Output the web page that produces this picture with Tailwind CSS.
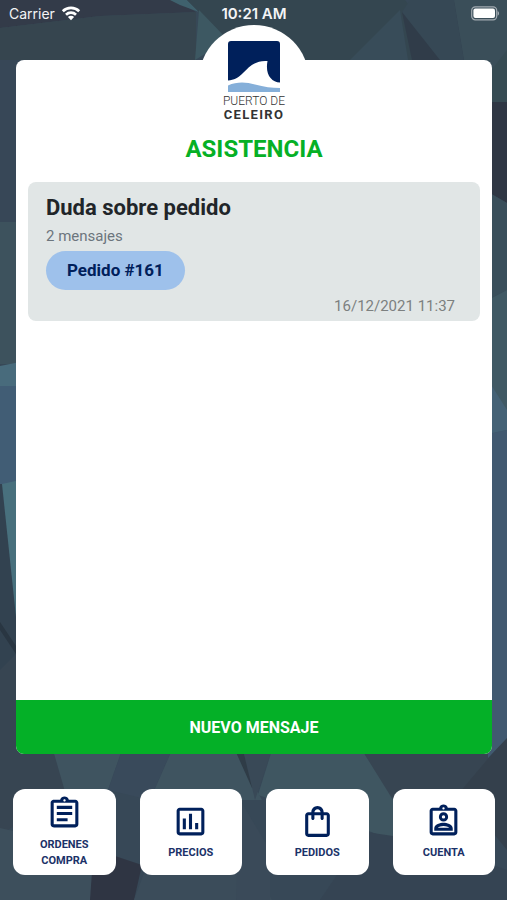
<!DOCTYPE html>
<html lang="es">
<head>
<meta charset="utf-8">
<meta name="viewport" content="width=device-width, initial-scale=1">
<title>Asistencia</title>
<script src="https://cdn.jsdelivr.net/npm/@tailwindcss/browser@4"></script>
</head>
<body class="font-[Roboto,sans-serif]">
<div class="relative isolate flex min-h-screen flex-col overflow-hidden bg-[#374857]">
  <!-- Low-poly backdrop -->
  <svg class="absolute inset-0 -z-10 h-full w-full" viewBox="0 0 507 900" preserveAspectRatio="none" aria-hidden="true">
    <path fill="#333b49" d="M0 0H175L196 12L100 16L0 28Z"/>
    <path fill="#36454f" d="M0 28L100 16L196 12V60H0Z"/>
    <path fill="#3f616d" d="M170 0H187L199 12L180 5Z"/>
    <path fill="#344650" d="M187 0H405L450 60H230L199 12Z"/>
    <path fill="#3d5862" d="M199 10L228 40L195 60Z"/>
    <path fill="#384c59" d="M350 60L400 10L408 60Z"/>
    <path fill="#303c49" d="M388 0H420L402 12L412 60H464L454 0Z"/>
    <path fill="#364855" d="M410 0H454L464 60H440L402 12Z"/>
    <path fill="#3a4e59" d="M454 0H507V102H480L464 60Z"/>
    <path fill="#364b53" d="M507 50L490 72V102H507Z"/>
    <path fill="#374757" d="M0 60H20V222H0Z"/>
    <path fill="#3d525d" d="M0 222H20V364H0Z"/>
    <path fill="#486b7c" d="M0 366L20 362V388H0Z"/>
    <path fill="#415d75" d="M0 386H20V484H0Z"/>
    <path fill="#324250" d="M0 484H3L20 655V700H0Z"/>
    <path fill="#48707d" d="M2 484L20 480V655Z"/>
    <path fill="#374552" d="M0 740H60L70 790L0 835Z"/>
    <path fill="#374552" d="M0 670L20 650V745H0Z"/>
    <path fill="#293642" d="M0 622L20 652V660L0 630Z"/>
    <path fill="#2f3744" d="M488 102H507V203L488 192Z"/>
    <path fill="#3a4f5b" d="M488 192L507 203V290L488 300Z"/>
    <path fill="#405964" d="M488 300L507 290V433H488Z"/>
    <path fill="#456276" d="M488 380L507 410V430L488 434Z"/>
    <path fill="#3f5460" d="M53 750H122L108 790L66 795Z"/>
    <path fill="#394a5b" d="M122 750H172L150 800L108 790Z"/>
    <path fill="#3f5460" d="M172 750H235L262 800H150Z"/>
    <path fill="#2f3c47" d="M235 750H243L256 788L252 788Z"/>
    <path fill="#394957" d="M243 750H272L255 800Z"/>
    <path fill="#3f5661" d="M272 750H362L395 800L420 850L366 830L258 795Z"/>
    <path fill="#374552" d="M362 750H495L460 800H393Z"/>
    <path fill="#34404c" d="M507 736L460 792L507 850Z"/>
    <path fill="#415970" d="M488 434L507 430V738L488 758Z"/>
    <path fill="#3d4f5c" d="M0 828L18 832L95 875L92 900H0Z"/>
    <path fill="#2f3543" d="M112 855L142 865L134 900H90L92 872Z"/>
    <path fill="#3b4c5a" d="M146 868L250 860L272 900H134Z"/>
    <path fill="#3a4a59" d="M240 800L270 850V900H236Z"/>
    <path fill="#354453" d="M366 832L420 840L507 870V900H320Z"/>
  </svg>

  <header class="flex h-7 items-center font-[Inter,sans-serif] text-gray-100">
    <div class="flex flex-1 items-center gap-[6px] pl-[9px] text-sm">
      <span>Carrier</span>
      <svg class="h-4 w-5" viewBox="0 0 20 16" role="img" aria-label="Wi-Fi">
        <g fill="none" stroke="#fff" stroke-width="2.7">
          <path d="M1.800 5.200a11.700 11.700 0 0 1 16.400 0"/>
          <path d="M5 8.700a7.200 7.200 0 0 1 10 0"/>
        </g>
        <path fill="#fff" d="M10 14.200L6.900 11a4.400 4.400 0 0 1 6.200 0Z"/>
      </svg>
    </div>
    <time class="text-[15px] font-semibold">10:21 AM</time>
    <div class="flex flex-1 justify-end pr-2">
      <svg class="h-4 w-7" viewBox="0 0 28 16" role="img" aria-label="Batería">
        <rect x="0.7" y="0.8" width="25" height="13" rx="3.6" fill="none" stroke="#a2aab1" stroke-width="1.2"/>
        <rect x="2.4" y="2.5" width="21.6" height="9.6" rx="2" fill="#fff"/>
        <path fill="#a2aab1" d="M26.600 5q1.600.8 1.400 2.300q.2 1.700-1.400 2.500Z"/>
      </svg>
    </div>
  </header>

  <main class="relative mr-[15px] ml-4 mt-8 flex flex-1 flex-col rounded-lg bg-white">
    <div class="absolute -top-[35px] left-1/2 flex size-[110px] -translate-x-1/2 flex-col items-center rounded-full bg-white pt-4">
      <svg class="h-[52px] w-[52px]" viewBox="0 0 52 52" aria-hidden="true">
        <path fill="#00205b" d="M3 0H49Q52 0 52 3V41.500C43 41 37 33 39.500 20C27 19 21 26 15 32C10 37 6 39 0 39.500V3Q0 0 3 0Z"/>
        <path fill="#85afd9" d="M0 44.500C9 40.500 18 41 27 43.500C36 46 44 47 52 47V51H0Z"/>
      </svg>
      <div class="mt-[2px] text-center whitespace-nowrap text-[#333]">
        <div class="text-xs/[13px] font-light">PUERTO DE</div>
        <div class="text-[13px]/[13px] font-bold tracking-widest">CELEIRO</div>
      </div>
    </div>

    <h1 class="mt-[73px] text-center text-2xl leading-8 font-bold text-[#06b025]">ASISTENCIA</h1>

    <article class="mx-3 mt-[17px] flex flex-col items-start rounded-lg bg-[#e1e6e6] px-[18px] pt-3">
      <h2 class="text-[22px] leading-7 font-bold text-[#212529]">Duda sobre pedido</h2>
      <p class="mt-1 text-[15px] leading-5 text-[#6c757d]">2 mensajes</p>
      <a href="#pedido-161" class="mt-[5px] rounded-full bg-[#9ec1eb] px-[21px] py-2 text-[17px] leading-[23px] font-bold text-[#00205b]">Pedido #161</a>
      <time class="mt-[6px] mr-[7px] self-end pb-[5px] text-[15px] leading-5 text-[#7c8080]">16/12/2021 11:37</time>
    </article>

    <button type="button" class="mt-auto h-[54px] rounded-b-lg bg-[#04b027] pt-[2px] text-base font-bold text-white">NUEVO MENSAJE</button>
  </main>

  <nav class="mr-3 ml-[13px] mt-[35px] mb-[25px] grid grid-cols-4 gap-6 text-center text-[11px] leading-4 font-bold text-[#1b3268]">
    <a href="#ordenes" class="flex h-[86px] flex-col items-center justify-center gap-[5px] rounded-xl bg-white px-5">
      <svg class="size-[37px]" viewBox="0 0 24 24" fill="#00205b" aria-hidden="true"><path d="M7 15h7v2H7zm0-4h10v2H7zm0-4h10v2H7zm12-4h-4.180C14.400 1.840 13.300 1 12 1c-1.300 0-2.400.840-2.820 2H5c-.140 0-.270.010-.400.040a2.008 2.008 0 0 0-1.440 1.190c-.1.230-.160.490-.160.770v14c0 .270.060.540.160.780s.250.450.430.640c.270.270.620.470 1.010.550.130.020.260.030.400.030h14c1.100 0 2-.9 2-2V5c0-1.100-.9-2-2-2zm-7-.25c.410 0 .750.340.750.750s-.340.750-.750.750-.750-.340-.750-.750.340-.750.750-.750zM19 19H5V5h14v14z"/></svg>
      <span>ORDENES COMPRA</span>
    </a>
    <a href="#precios" class="flex h-[86px] flex-col items-center justify-center gap-[5px] rounded-xl bg-white">
      <svg class="size-[37px]" viewBox="0 0 24 24" fill="#00205b" aria-hidden="true"><path d="M19 3H5c-1.100 0-2 .9-2 2v14c0 1.100.9 2 2 2h14c1.100 0 2-.9 2-2V5c0-1.100-.9-2-2-2zm0 16H5V5h14v14zM7 10h2v7H7zm4-3h2v10h-2zm4 6h2v4h-2z"/></svg>
      <span>PRECIOS</span>
    </a>
    <a href="#pedidos" class="flex h-[86px] flex-col items-center justify-center gap-[5px] rounded-xl bg-white">
      <svg class="size-[37px]" viewBox="0 0 24 24" fill="#00205b" aria-hidden="true"><path d="M18 6h-2c0-2.210-1.790-4-4-4S8 3.790 8 6H6c-1.100 0-2 .9-2 2v12c0 1.100.9 2 2 2h12c1.100 0 2-.9 2-2V8c0-1.100-.9-2-2-2zm-6-2c1.100 0 2 .9 2 2h-4c0-1.100.9-2 2-2zm6 16H6V8h2v2c0 .550.450 1 1 1s1-.450 1-1V8h4v2c0 .550.450 1 1 1s1-.450 1-1V8h2v12z"/></svg>
      <span>PEDIDOS</span>
    </a>
    <a href="#cuenta" class="flex h-[86px] flex-col items-center justify-center gap-[5px] rounded-xl bg-white">
      <svg class="size-[37px]" viewBox="0 0 24 24" fill="#00205b" aria-hidden="true"><path fill-rule="evenodd" d="M19 3h-4.180C14.400 1.840 13.300 1 12 1s-2.400.840-2.820 2H5c-1.100 0-2 .9-2 2v14c0 1.100.9 2 2 2h14c1.100 0 2-.9 2-2V5c0-1.100-.9-2-2-2zm-7-.25a.75.75 0 1 1 0 1.500a.75.75 0 0 1 0-1.500zM19 19H5V5h14v14z"/><path fill-rule="evenodd" d="M12 6a3 3 0 1 0 0 6a3 3 0 0 0 0-6zm0 1.900a1.100 1.100 0 1 1 0 2.200a1.100 1.100 0 0 1 0-2.200zM6 16.470V18h12v-1.530c0-2.500-3.970-3.580-6-3.580s-6 1.070-6 3.580zm2.310-.470c.690-.560 2.380-1.120 3.690-1.120s3.010.560 3.690 1.120z"/></svg>
      <span>CUENTA</span>
    </a>
  </nav>
</div>
</body>
</html>
